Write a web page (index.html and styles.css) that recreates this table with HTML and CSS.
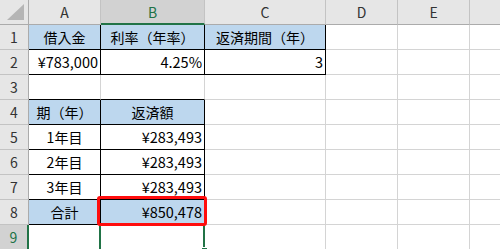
FILE: index.html
```html
<!DOCTYPE html>
<html lang="ja">
<head>
<meta charset="utf-8">
<title>返済計画</title>
<link rel="stylesheet" href="styles.css">
</head>
<body>
<div class="sheet">
  <div class="grid">
    <!-- column headers -->
    <div class="hd corner">
      <svg class="corner-mark" width="17" height="16" viewBox="0 0 17 16"><polygon points="17,0 17,16 0,16" fill="#b5b5b5"/></svg>
    </div>
    <div class="hd col">A</div>
    <div class="hd col sel-col">B</div>
    <div class="hd col">C</div>
    <div class="hd col">D</div>
    <div class="hd col">E</div>
    <div class="hd col last"></div>

    <!-- row 1 -->
    <div class="hd row">1</div>
    <div class="c fill bx center">借入金</div>
    <div class="c fill bx center">利率（年率）</div>
    <div class="c fill bx center">返済期間（年）</div>
    <div class="c"></div>
    <div class="c"></div>
    <div class="c last"></div>

    <!-- row 2 -->
    <div class="hd row">2</div>
    <div class="c bx num">¥783,000</div>
    <div class="c bx num">4.25%</div>
    <div class="c bx num">3</div>
    <div class="c"></div>
    <div class="c"></div>
    <div class="c last"></div>

    <!-- row 3 -->
    <div class="hd row">3</div>
    <div class="c bb"></div>
    <div class="c bb"></div>
    <div class="c"></div>
    <div class="c"></div>
    <div class="c"></div>
    <div class="c last"></div>

    <!-- row 4 -->
    <div class="hd row">4</div>
    <div class="c fill bx center">期（年）</div>
    <div class="c fill bx center">返済額</div>
    <div class="c"></div>
    <div class="c"></div>
    <div class="c"></div>
    <div class="c last"></div>

    <!-- row 5 -->
    <div class="hd row">5</div>
    <div class="c bx center">1年目</div>
    <div class="c bx num">¥283,493</div>
    <div class="c"></div>
    <div class="c"></div>
    <div class="c"></div>
    <div class="c last"></div>

    <!-- row 6 -->
    <div class="hd row">6</div>
    <div class="c bx center">2年目</div>
    <div class="c bx num">¥283,493</div>
    <div class="c"></div>
    <div class="c"></div>
    <div class="c"></div>
    <div class="c last"></div>

    <!-- row 7 -->
    <div class="hd row">7</div>
    <div class="c bx center">3年目</div>
    <div class="c bx num">¥283,493</div>
    <div class="c"></div>
    <div class="c"></div>
    <div class="c"></div>
    <div class="c last"></div>

    <!-- row 8 -->
    <div class="hd row">8</div>
    <div class="c fill bx center">合計</div>
    <div class="c fill bx num">¥850,478</div>
    <div class="c"></div>
    <div class="c"></div>
    <div class="c"></div>
    <div class="c last"></div>

    <!-- row 9 -->
    <div class="hd row sel-row">9</div>
    <div class="c"></div>
    <div class="c"></div>
    <div class="c"></div>
    <div class="c"></div>
    <div class="c"></div>
    <div class="c last"></div>
  </div>

  <!-- active cell B9 -->
  <div class="active-cell"><span class="fill-handle"></span></div>
  <!-- highlight around the total -->
  <div class="callout"></div>
</div>
</body>
</html>
```

FILE: styles.css
```css
* { box-sizing: border-box; }

html, body {
  margin: 0;
  padding: 0;
  background: #fff;
  overflow: hidden;
}

.sheet {
  position: relative;
  width: 500px;
  height: 249px;
  overflow: hidden;
  font-family: "Noto Sans CJK JP", "Noto Sans", sans-serif;
  font-size: 14px;
  color: #000;
}

.grid {
  display: grid;
  grid-template-columns: 29px 72px 104px 121px 72px 72px 1fr;
  grid-template-rows: repeat(10, 25px);
}

/* headers */
.hd {
  background: #e6e6e6;
  color: #333;
  display: flex;
  align-items: center;
  justify-content: center;
  font-size: 14px;
}

.corner {
  border-right: 1px solid #ababab;
  border-bottom: 1px solid #ababab;
  align-items: flex-end;
  justify-content: flex-end;
  padding: 0 4px 4px 0;
}

.corner-mark { display: block; }

.col {
  border-right: 1px solid #c3c3c3;
  border-bottom: 1px solid #ababab;
}

.col.last { border-right: none; }

.sel-col {
  background: #d2d2d2;
  color: #217346;
  border-bottom: 2px solid #217346;
}

.row {
  border-right: 1px solid #ababab;
  border-bottom: 1px solid #c3c3c3;
}

.sel-row {
  background: #d2d2d2;
  color: #217346;
  border-right: 2px solid #217346;
}

/* cells */
.c {
  border-right: 1px solid #d4d4d4;
  border-bottom: 1px solid #d4d4d4;
  display: flex;
  align-items: center;
  padding: 0 2px;
  white-space: nowrap;
  line-height: 1;
}

.c.last { border-right: none; }

.fill { background: #bdd7ee; }

.bx {
  border-right-color: #000;
  border-bottom-color: #000;
}

.bb { border-bottom-color: #000; }

.center { justify-content: center; }

.num {
  justify-content: flex-end;
  font-size: 14.5px;
}

/* selection of B9 */
.active-cell {
  position: absolute;
  left: 99px;
  top: 223px;
  width: 106px;
  height: 40px;
  border: 2px solid #217346;
}

.fill-handle {
  position: absolute;
  right: -5px;
  top: 22px;
  width: 7px;
  height: 7px;
  background: #217346;
  border: 1px solid #fff;
}

/* red outline drawn around the total amount */
.callout {
  position: absolute;
  left: 97px;
  top: 196px;
  width: 110px;
  height: 30px;
  border: 3.5px solid #ff0d0d;
  border-radius: 3px;
}
```
